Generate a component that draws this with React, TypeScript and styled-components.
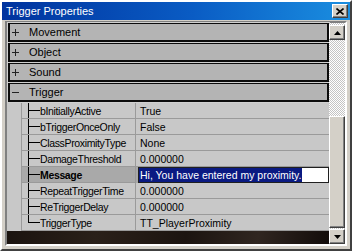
import * as React from 'react'
import styled, { createGlobalStyle } from 'styled-components'

const GlobalStyle = createGlobalStyle`
  html, body {
    margin: 0;
    padding: 0;
    background: #d4d0c8;
  }
  body {
    font-family: 'Liberation Sans', Arial, sans-serif;
    font-size: 10.5px;
  }
`

const Window = styled.div`
  box-sizing: border-box;
  width: 352px;
  height: 251px;
  display: flex;
  flex-direction: column;
  background: #d4d0c8;
  border: 2px solid;
  border-color: #ffffff #404040 #404040 #ffffff;
`

const TitleBar = styled.div`
  flex: none;
  height: 18px;
  display: flex;
  align-items: center;
  justify-content: space-between;
  padding: 0 2px 0 4px;
  background: linear-gradient(to right, #00339e, #0a5cc4 55%, #1a8ee0);
  color: #fff;
  font-size: 11px;
`

const CloseButton = styled.div`
  box-sizing: border-box;
  width: 16px;
  height: 14px;
  display: flex;
  align-items: center;
  justify-content: center;
  background: #d4d0c8;
  border: 1px solid;
  border-color: #ffffff #404040 #404040 #ffffff;
  box-shadow: inset -1px -1px #808080;
`

const Body = styled.div`
  flex: 1;
  display: flex;
  padding: 1px 3px 3px;
  min-height: 0;
`

const Frame = styled.div`
  flex: 1;
  display: flex;
  border: 2px solid;
  border-color: #808080 #ffffff #ffffff #808080;
  box-shadow: inset 1px 1px #404040;
  min-height: 0;
`

const List = styled.div`
  flex: 1;
  display: flex;
  flex-direction: column;
  background: linear-gradient(100deg, #140e0b 0%, #2a2019 35%, #1c1410 60%, #302620 80%, #120c0a 100%);
`

const Category = styled.div`
  box-sizing: border-box;
  height: 19px;
  margin: 0 0 1px 1px;
  display: flex;
  align-items: center;
  background: #b4b4b4;
  border: 2px solid #0c0c0c;
  border-top-width: 1px;
  outline: 1px solid #d0d0d0;
  color: #000;
  font-size: 11px;
`

const Sign = styled.span`
  box-sizing: border-box;
  width: 19px;
  padding-left: 2px;
  display: flex;
`

const Properties = styled.div`
  display: flex;
  flex-direction: column;
  background: #c8c8c8;
`

const Row = styled.div<{ $active?: boolean }>`
  height: 16px;
  display: flex;
  background: ${p => (p.$active ? '#a9a9a9' : '#c8c8c8')};
`

const Indent = styled.div`
  width: 14px;
  flex: none;
  background: #c8c8c8;
  border-right: 1px solid #9a9a9a;
`

const Tree = styled.div<{ $last?: boolean }>`
  width: 17px;
  flex: none;
  display: flex;
  flex-direction: column;
  padding-left: 6px;
  box-sizing: border-box;
  border-bottom: 1px solid #9a9a9a;
  & > span:first-child {
    height: 7px;
    width: 11px;
    border-left: 1px solid #000;
    border-bottom: 1px solid #000;
  }
  & > span:last-child {
    flex: 1;
    border-left: 1px solid ${p => (p.$last ? 'transparent' : '#000')};
  }
`

const Name = styled.div<{ $active?: boolean }>`
  width: 95px;
  flex: none;
  padding-left: 1px;
  display: flex;
  align-items: center;
  border-right: 1px solid #9a9a9a;
  border-bottom: 1px solid #9a9a9a;
  letter-spacing: -0.35px;
  font-weight: ${p => (p.$active ? 'bold' : 'normal')};
  white-space: nowrap;
  overflow: hidden;
`

const Value = styled.div`
  flex: 1;
  display: flex;
  align-items: center;
  padding-left: 4px;
  background: #c8c8c8;
  border-bottom: 1px solid #9a9a9a;
  white-space: nowrap;
  overflow: hidden;
`

const Editor = styled.div`
  flex: 1;
  display: flex;
  align-items: center;
  margin-left: 2px;
  box-sizing: border-box;
  height: 16px;
  background: #fff;
  border: 1px solid #202020;
  white-space: nowrap;
  overflow: hidden;
`

const Selected = styled.span`
  background: #0a1a82;
  color: #fff;
  padding: 0 1px;
  line-height: 14px;
`

const ScrollBar = styled.div`
  width: 16px;
  flex: none;
  display: flex;
  flex-direction: column;
  padding-top: 2px;
  box-sizing: border-box;
  background: repeating-conic-gradient(#ffffff 0 25%, #c4c4c4 0 50%) 0 0 / 2px 2px;
`

const ArrowButton = styled.div`
  box-sizing: border-box;
  width: 16px;
  height: 15px;
  flex: none;
  display: flex;
  align-items: center;
  justify-content: center;
  background: #d4d0c8;
  border: 1px solid;
  border-color: #ffffff #404040 #404040 #ffffff;
  box-shadow: inset -1px -1px #808080;
`

const Track = styled.div`
  flex: 1;
  display: flex;
  flex-direction: column;
  justify-content: flex-end;
`

const Thumb = styled.div`
  box-sizing: border-box;
  height: 112px;
  margin-bottom: 1px;
  background: #d4d0c8;
  border: 1px solid;
  border-color: #ffffff #404040 #404040 #ffffff;
  box-shadow: inset -1px -1px #808080;
`

const Plus = () => (
  <svg width="7" height="7" viewBox="0 0 7 7">
    <path d="M3.5 0v7M0 3.5h7" stroke="#222" strokeWidth="1" />
  </svg>
)

const Minus = () => (
  <svg width="7" height="7" viewBox="0 0 7 7">
    <path d="M0 3.5h7" stroke="#222" strokeWidth="1" />
  </svg>
)

const Arrow = ({ down }: { down?: boolean }) => (
  <svg width="7" height="4" viewBox="0 0 7 4">
    <path d={down ? 'M0 0h7L3.5 4z' : 'M0 4h7L3.5 0z'} fill="#000" />
  </svg>
)

const categories = [
  { name: 'Movement', open: false },
  { name: 'Object', open: false },
  { name: 'Sound', open: false },
  { name: 'Trigger', open: true },
]

const props = [
  { name: 'bInitiallyActive', value: 'True' },
  { name: 'bTriggerOnceOnly', value: 'False' },
  { name: 'ClassProximityType', value: 'None' },
  { name: 'DamageThreshold', value: '0.000000' },
  { name: 'Message', value: 'Hi, You have entered my proximity.', editing: true },
  { name: 'RepeatTriggerTime', value: '0.000000' },
  { name: 'ReTriggerDelay', value: '0.000000' },
  { name: 'TriggerType', value: 'TT_PlayerProximity' },
]

export default function App() {
  return (
    <>
      <GlobalStyle />
      <Window>
        <TitleBar>
          <span>Trigger Properties</span>
          <CloseButton>
            <svg width="8" height="7" viewBox="0 0 8 7">
              <path d="M0.5 0.5l7 6M7.5 0.5l-7 6" stroke="#000" strokeWidth="1.6" />
            </svg>
          </CloseButton>
        </TitleBar>
        <Body>
          <Frame>
            <List>
              {categories.map(c => (
                <React.Fragment key={c.name}>
                  <Category>
                    <Sign>{c.open ? <Minus /> : <Plus />}</Sign>
                    {c.name}
                  </Category>
                  {c.open && (
                    <Properties>
                      {props.map((p, i) => (
                        <Row key={p.name} $active={p.editing}>
                          <Indent />
                          <Tree $last={i === props.length - 1}>
                            <span />
                            <span />
                          </Tree>
                          <Name $active={p.editing}>{p.name}</Name>
                          {p.editing ? (
                            <Editor>
                              <Selected>{p.value}</Selected>
                            </Editor>
                          ) : (
                            <Value>{p.value}</Value>
                          )}
                        </Row>
                      ))}
                    </Properties>
                  )}
                </React.Fragment>
              ))}
            </List>
            <ScrollBar>
              <ArrowButton>
                <Arrow />
              </ArrowButton>
              <Track>
                <Thumb />
              </Track>
              <ArrowButton>
                <Arrow down />
              </ArrowButton>
            </ScrollBar>
          </Frame>
        </Body>
      </Window>
    </>
  )
}
